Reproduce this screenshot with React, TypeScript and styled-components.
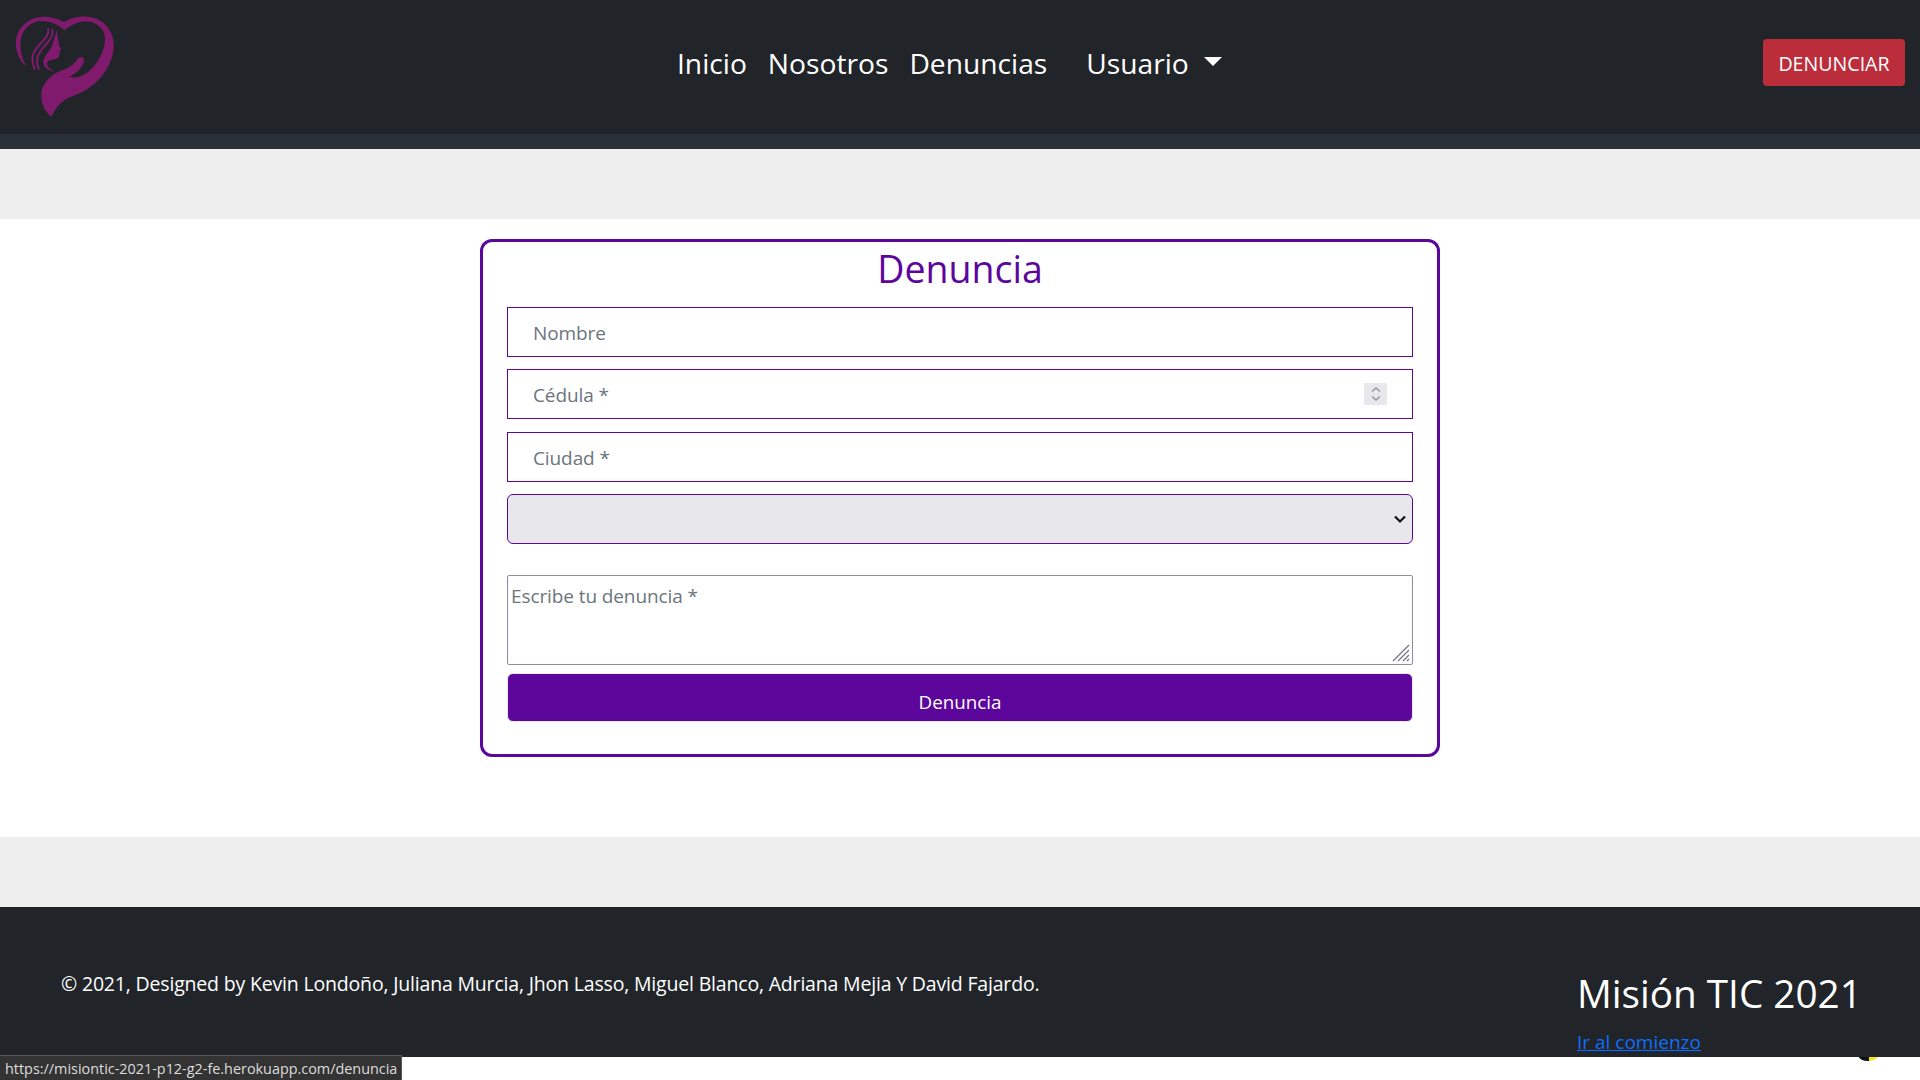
import React from 'react';
import styled, { createGlobalStyle } from 'styled-components';

const purple = '#5c069c';

const GlobalStyle = createGlobalStyle`
	html, body {
		margin: 0;
		padding: 0;
		background: #fff;
	}
	body {
		font-family: 'Open Sans', 'Noto Sans', 'Liberation Sans', sans-serif;
		overflow: hidden;
	}
	* {
		box-sizing: border-box;
	}
`;

const Logo = () => (
	<LogoSvg viewBox='40 40 310 320' aria-hidden>
		<path
			fill='#7f1a6d'
			d='M193 68 C215 52 250 46 280 54 C320 66 342 100 341 142 C338 195 300 250 245 278 C210 292 175 300 155 351 C135 335 122 310 124 280 C128 245 160 218 195 208 C212 202 225 190 235 174 C242 168 254 172 252 184 C246 204 228 222 208 230 C232 240 262 224 285 195 C308 165 320 130 312 100 C300 70 262 56 225 72 C212 78 202 84 193 92 C175 74 150 62 120 64 C88 68 66 92 62 125 C60 155 68 182 82 201 C62 188 48 160 48 128 C50 88 80 56 125 51 C150 50 174 56 193 68 Z'
		/>
		<HairStroke d='M145 88 C150 118 104 135 98 170 C96 182 100 196 104 207' />
		<HairStroke d='M157 90 C164 122 120 142 113 172 C110 186 112 198 117 207' />
		<path
			fill='#7f1a6d'
			d='M170 90 C172 108 176 124 178 138 L184 149 L179 154 C180 162 178 172 172 176 C160 181 146 178 141 190 C141 200 151 210 166 216 C146 215 130 202 130 186 C131 166 152 154 158 132 C162 116 168 104 170 90 Z'
		/>
	</LogoSvg>
);

const App = () => (
	<>
		<GlobalStyle />
		<Nav>
			<Logo />
			<NavLinks>
				<NavLink>Inicio</NavLink>
				<NavLink>Nosotros</NavLink>
				<NavLink>Denuncias</NavLink>
				<UserLink>
					Usuario
					<Caret />
				</UserLink>
			</NavLinks>
			<ReportButton>DENUNCIAR</ReportButton>
		</Nav>
		<NavShadow />
		<GreyBand />
		<Main>
			<Card>
				<Title>Denuncia</Title>
				<Field type='text' placeholder='Nombre' readOnly />
				<SpinWrap>
					<Field type='text' placeholder='Cédula *' readOnly />
					<Spinner>
						<svg width='10' height='16' viewBox='0 0 10 16' fill='none' stroke='#9a95ab' strokeWidth='1.6'>
							<path d='M1 5.5 L5 2 L9 5.5' />
							<path d='M1 10.5 L5 14 L9 10.5' />
						</svg>
					</Spinner>
				</SpinWrap>
				<Field type='text' placeholder='Ciudad *' readOnly />
				<SelectWrap>
					<SelectBox />
					<SelectChevron viewBox='0 0 16 16' fill='none' stroke='#111' strokeWidth='2.2'>
						<path d='M3 5.5 L8 10.5 L13 5.5' />
					</SelectChevron>
				</SelectWrap>
				<MessageWrap>
					<Message placeholder='Escribe tu denuncia *' readOnly />
					<ResizeGrip viewBox='0 0 18 18' fill='none' stroke='#77738a' strokeWidth='1.3'>
						<path d='M1 17 L17 1' />
						<path d='M6 17 L17 6' />
						<path d='M11 17 L17 11' />
						<path d='M15 17 L17 15' />
					</ResizeGrip>
				</MessageWrap>
				<Submit>Denuncia</Submit>
			</Card>
		</Main>
		<GreyBand />
		<Footer>
			<Credits>© 2021, Designed by Kevin Londoño, Juliana Murcia, Jhon Lasso, Miguel Blanco, Adriana Mejia Y David Fajardo.</Credits>
			<FooterSide>
				<SideTitle>Misión TIC 2021</SideTitle>
				<TopLink href='#'>Ir al comienzo</TopLink>
			</FooterSide>
		</Footer>
		<BlobPeek />
		<StatusBar>https://misiontic-2021-p12-g2-fe.herokuapp.com/denuncia</StatusBar>
	</>
);

const Nav = styled.nav`
	height: 134px;
	background: #212529;
	display: flex;
	align-items: center;
	padding: 0 15px 10px 13px;
`;

const LogoSvg = styled.svg`
	width: 104px;
	height: 107px;
	margin: 13px 18px 0 0;
	align-self: flex-start;
	flex: none;
`;

const HairStroke = styled.path`
	fill: none;
	stroke: #7f1a6d;
	stroke-width: 6;
	stroke-linecap: round;
`;

const NavLinks = styled.div`
	display: flex;
	align-items: center;
	gap: 21px;
	margin: 0 auto;
	padding-top: 2px;
	width: 544px;
	flex: none;
`;

const NavLink = styled.a`
	color: #fff;
	font-size: 28.2px;
	line-height: 40px;
	white-space: nowrap;
`;

const UserLink = styled(NavLink)`
	display: flex;
	align-items: center;
	margin-left: 18px;
`;

const Caret = styled.span`
	width: 0;
	height: 0;
	margin: -3px 0 0 15px;
	border-top: 9px solid #fff;
	border-left: 9px solid transparent;
	border-right: 9px solid transparent;
`;

const ReportButton = styled.button`
	width: 142px;
	height: 47px;
	border: none;
	border-radius: 4px;
	background: #bb2d3b;
	color: #fff;
	font: inherit;
	font-size: 19.6px;
	padding: 2px 0 0;
	flex: none;
`;

const NavShadow = styled.div`
	height: 15px;
	background: #2b2f38;
`;

const GreyBand = styled.div`
	height: 70px;
	background: #eee;
`;

const Main = styled.main`
	height: 618px;
	padding-top: 20px;
	background: #fff;
`;

const Card = styled.section`
	width: 960px;
	height: 518px;
	margin: 0 auto;
	padding: 0 24px;
	border: 3px solid ${purple};
	border-radius: 12px;
	display: flex;
	flex-direction: column;
`;

const Title = styled.h1`
	margin: 0;
	height: 65px;
	color: ${purple};
	font-size: 37.5px;
	font-weight: 400;
	line-height: 54px;
	text-align: center;
`;

const Field = styled.input`
	display: block;
	width: 100%;
	height: 50px;
	margin-bottom: 12.4px;
	padding: 2px 25px 0;
	border: 1.5px solid ${purple};
	border-radius: 0;
	background: #fff;
	font: inherit;
	font-size: 19px;
	letter-spacing: -0.1px;
	outline: none;

	&::placeholder {
		color: #6c757d;
		opacity: 1;
	}
`;

const SpinWrap = styled.div`
	position: relative;
`;

const Spinner = styled.div`
	position: absolute;
	top: 14px;
	right: 26px;
	width: 23px;
	height: 22px;
	background: #e8e7ec;
	display: flex;
	align-items: center;
	justify-content: center;
`;

const SelectWrap = styled.div`
	position: relative;
	margin-bottom: 31px;
`;

const SelectBox = styled.div`
	height: 50px;
	border: 1.5px solid ${purple};
	border-radius: 6px;
	background: #e8e7ec;
`;

const SelectChevron = styled.svg`
	position: absolute;
	top: 17px;
	right: 5px;
	width: 16px;
	height: 16px;
`;

const MessageWrap = styled.div`
	position: relative;
	height: 90px;
	margin-bottom: 8px;
`;

const Message = styled.textarea`
	display: block;
	width: 100%;
	height: 100%;
	padding: 6px 3px;
	border: 1px solid #8f8ba3;
	border-radius: 2px;
	background: #fff;
	font: inherit;
	font-size: 19px;
	letter-spacing: -0.1px;
	line-height: 28px;
	outline: none;
	resize: none;

	&::placeholder {
		color: #6c757d;
		opacity: 1;
	}
`;

const ResizeGrip = styled.svg`
	position: absolute;
	right: 3px;
	bottom: 3px;
	width: 18px;
	height: 18px;
`;

const Submit = styled.button`
	width: 100%;
	height: 49px;
	border: 1px solid #e8e7ec;
	border-radius: 6px;
	background: ${purple};
	color: #fff;
	font: inherit;
	font-size: 18.8px;
	padding: 8px 0 0;
`;

const Footer = styled.footer`
	height: 150px;
	background: #212529;
	color: #fff;
	display: flex;
	justify-content: space-between;
	padding: 0 61px;
	position: relative;
	z-index: 1;
`;

const Credits = styled.p`
	margin: 62px 0 0;
	font-size: 19.5px;
	letter-spacing: -0.18px;
	line-height: 30px;
`;

const FooterSide = styled.div`
	width: 282px;
	padding-top: 59px;
	display: flex;
	flex-direction: column;
`;

const SideTitle = styled.div`
	font-size: 38.7px;
	line-height: 54px;
	white-space: nowrap;
`;

const TopLink = styled.a`
	color: #0d6efd;
	font-size: 19px;
	line-height: 28px;
	margin-top: 8px;
`;

const BlobPeek = styled.div`
	position: fixed;
	left: 1856px;
	top: 1050px;
	width: 24px;
	height: 11px;
	border-radius: 0 0 12px 12px;
	background: linear-gradient(90deg, #111 55%, #f5e61c 55%);
`;

const StatusBar = styled.div`
	position: fixed;
	z-index: 2;
	left: 0;
	bottom: 0;
	height: 25px;
	width: 402px;
	padding: 3px 0 0 5px;
	background: #333;
	border-top: 1px solid #555;
	border-right: 1px solid #555;
	color: #ddd;
	font-size: 14.4px;
	line-height: 20px;
	white-space: nowrap;
	overflow: hidden;
`;

export default App;
